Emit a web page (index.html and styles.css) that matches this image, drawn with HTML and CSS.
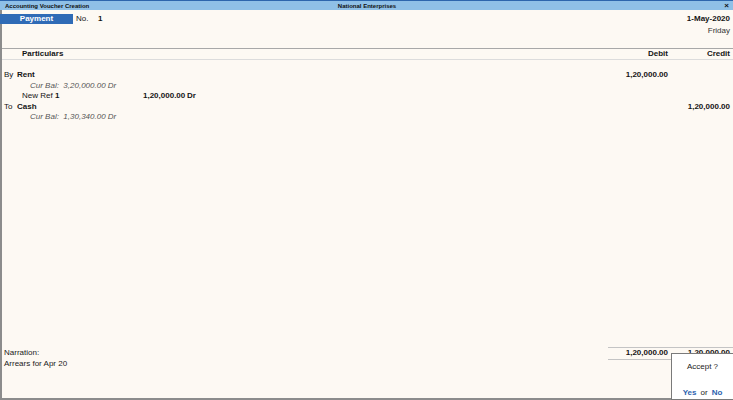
FILE: index.html
```html
<!DOCTYPE html>
<html lang="en">
<head>
  <meta charset="UTF-8">
  <title>Accounting Voucher Creation</title>
  <link rel="stylesheet" href="styles.css">
</head>
<body>
  <!-- Title bar -->
  <div class="titlebar">
    <span class="tb-left">Accounting Voucher Creation</span>
    <span class="tb-center">National Enterprises</span>
    <span class="tb-right">×</span>
  </div>

  <div class="screen">
    <!-- Voucher head -->
    <div class="voucher-head">
      <div class="vtype">
        <span class="vtype-name">Payment</span>
        <span class="vno-label">No.</span>
        <span class="vno">1</span>
      </div>
      <div class="vdate">
        <div class="date">1-May-2020</div>
        <div class="day">Friday</div>
      </div>
    </div>

    <!-- Column headings -->
    <div class="cols col-head">
      <span class="particulars">Particulars</span>
      <span class="amt">Debit</span>
      <span class="amt">Credit</span>
    </div>

    <!-- Entries -->
    <div class="entries">
      <div class="cols">
        <span class="ledger"><span class="drcr">By</span><b>Rent</b></span>
        <span class="amt bold">1,20,000.00</span>
        <span class="amt"></span>
      </div>
      <div class="cols">
        <span class="curbal">Cur Bal:&nbsp; 3,20,000.00 Dr</span>
      </div>
      <div class="cols">
        <span class="billref">
          <span class="ref-type">New Ref</span><b class="ref-name">1</b><b class="ref-amt">1,20,000.00</b><b>Dr</b>
        </span>
      </div>
      <div class="cols">
        <span class="ledger"><span class="drcr">To</span><b>Cash</b></span>
        <span class="amt"></span>
        <span class="amt bold">1,20,000.00</span>
      </div>
      <div class="cols">
        <span class="curbal">Cur Bal:&nbsp; 1,30,340.00 Dr</span>
      </div>
    </div>

    <!-- Narration and totals -->
    <div class="footer">
      <div class="narration">
        <div>Narration:</div>
        <div>Arrears for Apr 20</div>
      </div>
      <div class="totals">
        <span class="amt bold">1,20,000.00</span>
        <span class="amt bold">1,20,000.00</span>
      </div>
    </div>

    <!-- Accept prompt -->
    <div class="accept">
      <div class="accept-q">Accept ?</div>
      <div class="accept-opts"><span class="opt">Yes</span><span class="or">or</span><span class="opt">No</span></div>
    </div>
  </div>
</body>
</html>
```

FILE: styles.css
```css
body {
  margin: 0;
  width: 733px;
  height: 400px;
  overflow: hidden;
  font-family: "Liberation Sans", Arial, sans-serif;
  font-size: 8px;
  color: #151515;
  background: #fdf9f3;
}

b,
.bold {
  font-weight: bold;
}

/* Title bar */
.titlebar {
  display: grid;
  grid-template-columns: 1fr auto 1fr;
  align-items: center;
  height: 9px;
  border-top: 1px solid #2d66ad;
  background: #8fc0e7;
  font-size: 6px;
  font-weight: bold;
  color: #111;
  padding: 0 4px 0 5px;
}

.tb-center {
  text-align: center;
}

.tb-right {
  text-align: right;
  font-size: 8px;
}

.screen {
  position: relative;
  display: flex;
  flex-direction: column;
  height: 388px;
  border-left: 2px solid #8c8c8c;
  border-bottom: 2px solid #8c8c8c;
  line-height: 10.5px;
}

/* Voucher head */
.voucher-head {
  display: flex;
  justify-content: space-between;
  padding: 4px 3px 0 0;
  height: 34px;
}

.vtype {
  display: flex;
  align-items: center;
  height: 10px;
  margin-left: -2px;
}

.vtype-name {
  width: 73px;
  height: 10px;
  background: #2f6bb6;
  color: #fff;
  font-weight: bold;
  text-align: center;
}

.vno-label {
  margin-left: 3px;
  width: 22px;
}

.vno {
  font-weight: bold;
}

.vdate {
  text-align: right;
}

.date {
  font-weight: bold;
}

.day {
  margin-top: 1px;
  color: #333;
}

/* Columns */
.cols {
  display: grid;
  grid-template-columns: 1fr 62px 62px;
  padding-right: 3px;
  height: 10.5px;
}

.col-head {
  height: 10px;
  border-top: 1px solid #a8a8a8;
  border-bottom: 1px solid #dcdcdc;
  font-weight: bold;
}

.particulars {
  padding-left: 20px;
}

.amt {
  text-align: right;
}

.entries {
  flex: 1;
  padding-top: 10px;
}

.ledger {
  padding-left: 2px;
}

.drcr {
  display: inline-block;
  width: 13px;
}

.curbal {
  padding-left: 28px;
  font-style: italic;
  color: #555;
}

.billref {
  grid-column: 1 / 2;
  padding-left: 20px;
  white-space: nowrap;
}

.ref-type {
  display: inline-block;
  width: 33px;
}

.ref-name {
  display: inline-block;
  width: 88px;
}

.ref-amt {
  display: inline-block;
  width: 44px;
}

/* Footer */
.footer {
  display: flex;
  justify-content: space-between;
  height: 51px;
}

.narration {
  padding: 1px 0 0 2px;
  color: #222;
}

.totals {
  display: grid;
  grid-template-columns: 60px 62px;
  align-self: flex-start;
  padding-right: 3px;
  height: 10.5px;
  border-top: 1px solid #c4c4c4;
  border-bottom: 1px solid #c4c4c4;
}

/* Accept prompt */
.accept {
  position: absolute;
  right: 0;
  bottom: -2px;
  width: 61px;
  height: 45px;
  background: #fff;
  border: 1px solid #7a7a7a;
  border-right: none;
  text-align: center;
  color: #222;
}

.accept-q {
  margin-top: 8px;
}

.accept-opts {
  margin-top: 15px;
}

.or {
  margin: 0 4px;
}

.opt {
  color: #2c62ae;
  font-weight: bold;
}
```
